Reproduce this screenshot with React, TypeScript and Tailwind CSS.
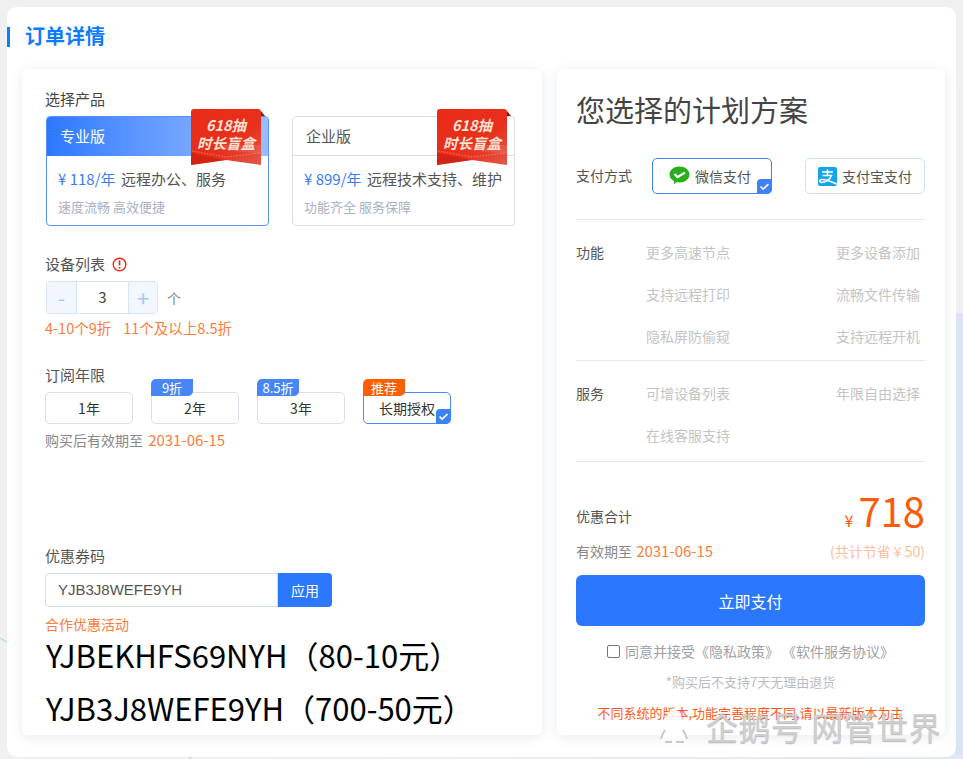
const cn = "font-['Noto_Sans_CJK_SC','Noto_Sans',sans-serif]";

function CheckCorner() {
  return (
    <div className="absolute -bottom-px -right-px flex h-[15px] w-[15px] items-center justify-center rounded-tl-[4px] rounded-br-[5px] bg-[#3d82f7]">
      <svg width="11" height="9" viewBox="0 0 11 9" fill="none">
        <path d="M1.5 4.5 L4.2 7 L9.5 2" stroke="#fff" strokeWidth="1.7" />
      </svg>
    </div>
  );
}

function Ribbon() {
  return (
    <div className="absolute -top-[8px] right-[3px] h-[57px] w-[75px]">
      <svg width="75" height="57" viewBox="0 0 75 57" className="absolute left-0 top-0">
        <defs>
          <linearGradient id="rb" x1="0" y1="0" x2="1" y2="1">
            <stop offset="0" stopColor="#e92b17" />
            <stop offset="0.6" stopColor="#e8301c" />
            <stop offset="1" stopColor="#e2584a" />
          </linearGradient>
        </defs>
        <path d="M71 2 L75 7 L71 7 Z" fill="#7a1a10" />
        <path d="M1 3 Q1 0 4 0 L68 0 Q71 0 71 3 L71 56 L36 51 L1 56 Z" fill="url(#rb)" />
        <path d="M24 36 H71 V45 L36 41 Z" fill="#f08a7a" opacity="0.25" />
        <path d="M1 44 L36 51 L1 56 Z" fill="#c9200f" opacity="0.7" />
        <path d="M2 42 L36 48 L70 44" fill="none" stroke="#f6a58f" strokeWidth="0.6" strokeDasharray="1.5 1.5" />
      </svg>
      <div className={`absolute left-0 top-[7px] w-[72px] text-center text-[14.5px] leading-[18px] font-bold italic text-[#fde3d6] ${cn}`}>
        618抽
        <br />
        时长盲盒
      </div>
    </div>
  );
}

function Plan({ name, price, desc, sub, active }: { name: string; price: string; desc: string; sub: string; active?: boolean }) {
  return (
    <div className={`relative h-[110px] w-[223px] rounded-[4px] border ${active ? "border-[#5a92f3]" : "border-[#dcdfe6]"}`}>
      <div
        className={`flex h-[39px] items-center rounded-t-[3px] pl-[13px] text-[15px] ${
          active ? "bg-gradient-to-r from-[#2b78fe] to-[#9bbdff] text-white" : "border-b border-[#dcdfe6] text-[#555]"
        }`}
      >
        {name}
      </div>
      <div className="mt-[12px] whitespace-nowrap pl-[11px] text-[15px] leading-[22px] text-[#555]">
        <span className="mr-[2px] text-[#3d7cf8]">{price}</span> {desc}
      </div>
      <div className="mt-[8px] pl-[11px] text-[13px] leading-[18px] text-[#a9b1c2]">{sub}</div>
      <Ribbon />
    </div>
  );
}

function YearOption({ label, tag, tagColor, active }: { label: string; tag?: string; tagColor?: string; active?: boolean }) {
  return (
    <div
      className={`relative flex h-[32px] w-[88px] items-center justify-center rounded-[5px] border text-[14px] text-[#333] ${
        active ? "border-[#4a88f2]" : "border-[#dcdfe6]"
      }`}
    >
      {label}
      {tag && (
        <div className={`absolute -left-px -top-[14px] flex h-[17px] w-[42px] items-center justify-center rounded-tl-[5px] rounded-br-[5px] text-[13px] text-white ${tagColor}`}>
          {tag}
        </div>
      )}
      {active && <CheckCorner />}
    </div>
  );
}

function Feature({ title, rows }: { title: string; rows: string[][] }) {
  return (
    <div className="flex">
      <div className="w-[70px] shrink-0 text-[14px] leading-[20px] text-[#555]">{title}</div>
      <div className="flex flex-1 flex-col gap-[22px] pr-[5px]">
        {rows.map((r) => (
          <div key={r[0]} className="flex justify-between text-[14px] leading-[20px] text-[#c4c4c4]">
            <span>{r[0]}</span>
            <span>{r[1]}</span>
          </div>
        ))}
      </div>
    </div>
  );
}

export default function App() {
  return (
    <div className={`relative h-[759px] w-[963px] overflow-hidden bg-[#f0f0f0] p-[7px] ${cn}`}>
      <div className="absolute right-0 top-[313px] h-[446px] w-[8px] bg-[#d9e5f7]" />
      <div className="absolute bottom-0 left-[190px] h-[4px] w-[773px] bg-gradient-to-r from-[#f0f0f0] to-[#dfe8f5]" />
      <svg width="200" height="123" viewBox="0 0 200 123" className="absolute left-0 top-[636px]" fill="none">
        <path d="M0 2 Q100 60 192 123" stroke="#a6e8cf" strokeWidth="1.2" />
      </svg>

      <div className="relative h-[750px] w-[949px] rounded-[10px] bg-white">
        <div className="flex h-[62px] items-start">
          <div className="mt-[20px] h-[20px] w-[3px] bg-[#0f7bff]" />
          <div className="ml-[15px] mt-[14px] text-[20px] leading-[30px] font-bold text-[#0f7bff]">订单详情</div>
        </div>
        <div className="flex gap-[15px] pl-[15px]">
          <div className="h-[666px] w-[520px] rounded-[6px] bg-white pl-[23px] pt-[20px] shadow-[0_2px_12px_rgba(60,80,130,0.12)]">
            <div className="text-[15px] leading-[20px] text-[#444]">选择产品</div>
            <div className="mt-[7px] flex gap-[23px] pl-px">
              <Plan active name="专业版" price="¥ 118/年" desc="远程办公、服务" sub="速度流畅 高效便捷" />
              <Plan name="企业版" price="¥ 899/年" desc="远程技术支持、维护" sub="功能齐全 服务保障" />
            </div>

            <div className="mt-[28px] flex items-center gap-[7px] text-[15px] leading-[20px] text-[#555]">
              设备列表
              <svg width="15" height="15" viewBox="0 0 15 15" fill="none">
                <circle cx="7.5" cy="7.5" r="6.3" stroke="#ee2a1c" strokeWidth="1.4" />
                <path d="M7.5 3.6 V8.6 M7.5 10 V11.5" stroke="#ee2a1c" strokeWidth="1.7" />
              </svg>
            </div>
            <div className="mt-[7px] flex items-center">
              <div className="ml-px flex h-[33px] w-[112px] items-stretch overflow-hidden rounded-[4px] border border-[#d6e4f8]">
                <div className="flex w-[29px] items-center justify-center bg-[#f2f6fe] text-[20px] text-[#a5c6f7]">-</div>
                <div className="flex w-[53px] items-center justify-center border-x border-[#d6e4f8] text-[15px] text-[#444]">3</div>
                <div className="flex w-[28px] items-center justify-center bg-[#f2f6fe] text-[22px] text-[#a5c6f7]">+</div>
              </div>
              <span className="ml-[9px] mt-[2px] text-[14px] text-[#888]">个</span>
            </div>
            <div className="mt-[5px] flex gap-[12px] text-[14.5px] leading-[18px] text-[#fb7d3c]">
              <span>4-10个9折</span>
              <span>11个及以上8.5折</span>
            </div>

            <div className="mt-[28px] text-[15px] leading-[20px] text-[#555]">订阅年限</div>
            <div className="mt-[7px] flex gap-[18px]">
              <YearOption label="1年" />
              <YearOption label="2年" tag="9折" tagColor="bg-[#4886f8]" />
              <YearOption label="3年" tag="8.5折" tagColor="bg-[#4886f8]" />
              <YearOption label="长期授权" tag="推荐" tagColor="bg-[#ff5f00]" active />
            </div>
            <div className="mt-[6px] text-[14px] leading-[20px] text-[#888]">
              购买后有效期至 <span className="ml-[2px] text-[15px] text-[#fb7d3c]">2031-06-15</span>
            </div>

            <div className="mt-[96px] text-[15px] leading-[20px] text-[#555]">优惠券码</div>
            <div className="mt-[7px] flex h-[34px] w-[287px]">
              <div className="flex flex-1 items-center rounded-l-[4px] border border-[#cfdff5] pl-[12px] font-['Liberation_Sans',sans-serif] text-[15px] text-[#555]">
                YJB3J8WEFE9YH
              </div>
              <div className="flex w-[54px] items-center justify-center rounded-r-[4px] bg-[#2b78fe] text-[14px] text-white">应用</div>
            </div>
            <div className="mt-[8px] text-[14px] leading-[18px] text-[#fb7d3c]">合作优惠活动</div>
            <div className="-mt-[5px] whitespace-nowrap pl-px text-[31px] leading-[53px] text-black">YJBEKHFS69NYH（80-10元）</div>
            <div className="whitespace-nowrap pl-px text-[31px] leading-[53px] text-black">YJB3J8WEFE9YH（700-50元）</div>
          </div>

          <div className="h-[666px] w-[388px] rounded-[6px] bg-white pl-[19px] pr-[20px] pt-[20px] shadow-[0_2px_12px_rgba(60,80,130,0.12)]">
            <div className="text-[29px] leading-[40px] text-[#444]">您选择的计划方案</div>
            <div className="mt-[29px] flex items-center">
              <div className="w-[76px] pb-[2px] text-[14px] text-[#555]">支付方式</div>
              <div className="relative flex h-[36px] w-[120px] items-center justify-center gap-[5px] rounded-[5px] border border-[#3d82f7] pr-[4px] text-[14px] text-[#555]">
                <svg width="21" height="20" viewBox="0 0 21 20">
                  <path d="M10.5 0.5 C16 0.5 20.5 4 20.5 8.5 C20.5 13 16 16.5 10.5 16.5 C9.5 16.5 8.5 16.4 7.6 16.1 L5.2 18.5 L5 15 C2.2 13.6 0.5 11.2 0.5 8.5 C0.5 4 5 0.5 10.5 0.5 Z" fill="#2aae1e" />
                  <path d="M5.5 8 L8.5 11 L16 6.6" stroke="#fff" strokeWidth="2.2" fill="none" />
                </svg>
                微信支付
                <CheckCorner />
              </div>
              <div className="ml-[33px] flex h-[36px] w-[120px] items-center justify-center gap-[5px] rounded-[5px] border border-[#cfdff5] text-[14px] text-[#555]">
                <svg width="19" height="19" viewBox="0 0 19 19">
                  <rect width="19" height="19" rx="2" fill="#12a5ea" />
                  <path d="M4 5 H15 M9.5 2.5 V8.5 M4.5 8.5 H13.5 C12 12.5 7.5 15.5 3 15.5 C1.5 15.5 1.5 13 3.5 12.5 C7 11.8 13 14.5 19 17" stroke="#fff" strokeWidth="1.6" fill="none" />
                </svg>
                支付宝支付
              </div>
            </div>
            <div className="mt-[25px] border-t border-[#e8e8e8] pb-[14px] pt-[22px]">
              <Feature
                title="功能"
                rows={[
                  ["更多高速节点", "更多设备添加"],
                  ["支持远程打印", "流畅文件传输"],
                  ["隐私屏防偷窥", "支持远程开机"],
                ]}
              />
            </div>
            <div className="border-y border-[#e8e8e8] pb-[16px] pt-[22px]">
              <Feature
                title="服务"
                rows={[
                  ["可增设备列表", "年限自由选择"],
                  ["在线客服支持", ""],
                ]}
              />
            </div>
            <div className="mt-[26px] flex h-[44px] items-center justify-between">
              <span className="mt-[12px] text-[14px] text-[#555]">优惠合计</span>
              <span className="flex items-baseline gap-[5px] text-[#ff5a09]">
                <span className="text-[16px]">¥</span>
                <span className="text-[40px] leading-[44px]">718</span>
              </span>
            </div>
            <div className="mt-[9px] flex h-[20px] items-center justify-between">
              <span className="text-[14px] text-[#888]">
                有效期至 <span className="ml-[1px] text-[15px] text-[#fb7d3c]">2031-06-15</span>
              </span>
              <span className="text-[14px] text-[#fcc09a]">(共计节省 ¥ 50)</span>
            </div>
            <div className="mt-[14px] flex h-[51px] items-center justify-center rounded-[6px] bg-[#2b78fe] text-[16px] text-white">立即支付</div>
            <div className="mt-[15px] flex h-[20px] items-center justify-center gap-[5px] text-[14px] leading-[20px] text-[#a0a0a8]">
              <div className="h-[13px] w-[13px] rounded-[2px] border border-[#767676]" />
              <span>同意并接受《隐私政策》 《软件服务协议》</span>
            </div>
            <div className="mt-[11px] text-center text-[13px] leading-[20px] text-[#b9bcc4]">*购买后不支持7天无理由退货</div>
            <div className="mt-[11px] whitespace-nowrap text-center text-[13px] leading-[20px] text-[#ff5a1e]">不同系统的版本,功能完善程度不同,请以最新版本为主</div>
          </div>
        </div>
      </div>

      <div className="absolute left-[656px] top-[706px] flex items-center gap-[15px] text-[32px] leading-[40px] tracking-[0.5px] text-[#cfcfcf] [text-shadow:0_1px_1px_rgba(120,120,120,0.5)]">
        <svg width="35" height="36" viewBox="0 0 35 36">
          <path d="M18 2 C11 2 10 9 9 14 C7 19 3 24 5 31 C8 33 9 32 11 30 C14 32 22 32 25 30 C27 32 29 33 31 31 C33 24 29 19 27 14 C26 9 25 2 18 2 Z" fill="#fff" fillOpacity="0.88" />
          <path d="M5 31 C6 27 7 25 9 22 M31 31 C30 27 29 25 27 22 M9 34 H16 M20 34 H28" stroke="#c8c8c8" strokeWidth="2" fill="none" />
        </svg>
        <span className="whitespace-nowrap">企鹅号 网管世界</span>
      </div>
    </div>
  );
}
